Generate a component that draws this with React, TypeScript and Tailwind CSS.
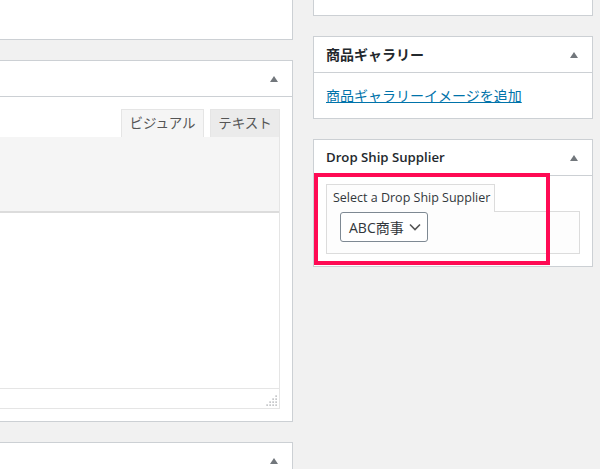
import React from "react";

const font = { fontFamily: '"Open Sans", "Noto Sans CJK JP", sans-serif' };

function Arrow() {
  return (
    <svg width="8" height="6" viewBox="0 0 8 6" className="shrink-0">
      <polygon points="4,0 8,6 0,6" fill="#72777c" />
    </svg>
  );
}

function Grip() {
  const dots: [number, number][] = [];
  for (let r = 0; r < 4; r++) {
    for (let c = 3 - r; c < 4; c++) {
      dots.push([c * 3 + 1, r * 3 + 1]);
    }
  }
  return (
    <svg width="11" height="11" viewBox="0 0 11 11">
      {dots.map(([x, y], i) => (
        <rect key={i} x={x - 0.5} y={y - 0.5} width="1.2" height="1.2" fill="#8c8f94" />
      ))}
    </svg>
  );
}

function PanelHeader({ title, size = "text-[14px]" }: { title?: string; size?: string }) {
  return (
    <div className="h-[36px] border-b border-[#ccd0d4] flex items-center justify-between pl-[12px] pr-[14px]">
      <span className={`${size} font-semibold text-[#23282d]`}>{title}</span>
      <Arrow />
    </div>
  );
}

export default function App() {
  return (
    <div className="relative w-[600px] h-[469px] overflow-hidden bg-[#f1f1f1] flex items-start gap-[20px]" style={font}>
      {/* main column */}
      <div className="w-[293px] shrink-0 flex flex-col">
        <div className="shrink-0 h-[40px] bg-white border-r border-b border-[#ccd0d4]" />

        <div className="shrink-0 mt-[20px] bg-white border-t border-r border-b border-[#ccd0d4]">
          <PanelHeader />
          <div className="pt-[12px] pb-[12px] pr-[12px]">
            <div className="flex justify-end items-end gap-[6px] h-[28px]">
              <div className="h-[28px] w-[83px] bg-[#f5f5f5] border-t border-l border-r border-[#e5e5e5] flex items-center justify-center text-[13.5px] text-[#555]">
                ビジュアル
              </div>
              <div className="h-[28px] w-[70px] bg-[#ebebeb] border-t border-l border-r border-[#e5e5e5] flex items-center justify-center text-[13.5px] text-[#555]">
                テキスト
              </div>
            </div>
            <div className="border-r border-[#e5e5e5]">
              <div className="h-[76px] bg-[#f5f5f5] border-b-2 border-[#dcdcdc]" />
              <div className="h-[175px] bg-white" />
              <div className="h-[21px] bg-white border-t border-b border-[#e5e5e5] flex items-end justify-end pr-[2px] pb-[2px]">
                <Grip />
              </div>
            </div>
          </div>
        </div>

        <div className="shrink-0 mt-[20px] h-[60px] bg-white border-t border-r border-[#ccd0d4]">
          <div className="h-[36px] flex items-center justify-end pr-[14px]">
            <Arrow />
          </div>
        </div>
      </div>

      {/* sidebar */}
      <div className="w-[280px] shrink-0 flex flex-col">
        <div className="shrink-0 h-[16px] bg-white border-l border-r border-b border-[#ccd0d4]" />

        <div className="shrink-0 mt-[20px] bg-white border border-[#ccd0d4]">
          <PanelHeader title="商品ギャラリー" />
          <div className="px-[12px] py-[12px] leading-[21px]">
            <a className="text-[14px] text-[#0073aa] underline cursor-pointer">商品ギャラリーイメージを追加</a>
          </div>
        </div>

        <div className="shrink-0 mt-[20px] bg-white border border-[#ccd0d4]">
          <PanelHeader title="Drop Ship Supplier" size="text-[13.2px]" />
          <div className="px-[12px] pt-[8px] pb-[12px]">
            <div className="flex">
              <div className="relative -mb-px h-[28px] pl-[6px] pr-[4px] bg-[#fdfdfd] border-t border-l border-r border-[#dcdcdc] flex items-center text-[12.5px] text-[#32373c] whitespace-nowrap">
                Select a Drop Ship Supplier
              </div>
            </div>
            <div className="h-[43px] bg-[#fdfdfd] border border-[#dcdcdc] pl-[13px]">
              <div className="w-[88px] h-[30px] border border-[#7e8993] rounded-[3px] bg-white flex items-center justify-between pl-[8px] pr-[6px] text-[14px] text-[#32373c]">
                <span>ABC商事</span>
                <svg width="12" height="8" viewBox="0 0 12 8">
                  <polyline points="1,1.5 6,6.5 11,1.5" fill="none" stroke="#555" strokeWidth="1.6" />
                </svg>
              </div>
            </div>
          </div>
        </div>
      </div>

      {/* highlight annotation */}
      <div className="absolute left-[314px] top-[173px] w-[236px] h-[92px] border-4 border-[#ff0a54]" />
    </div>
  );
}
